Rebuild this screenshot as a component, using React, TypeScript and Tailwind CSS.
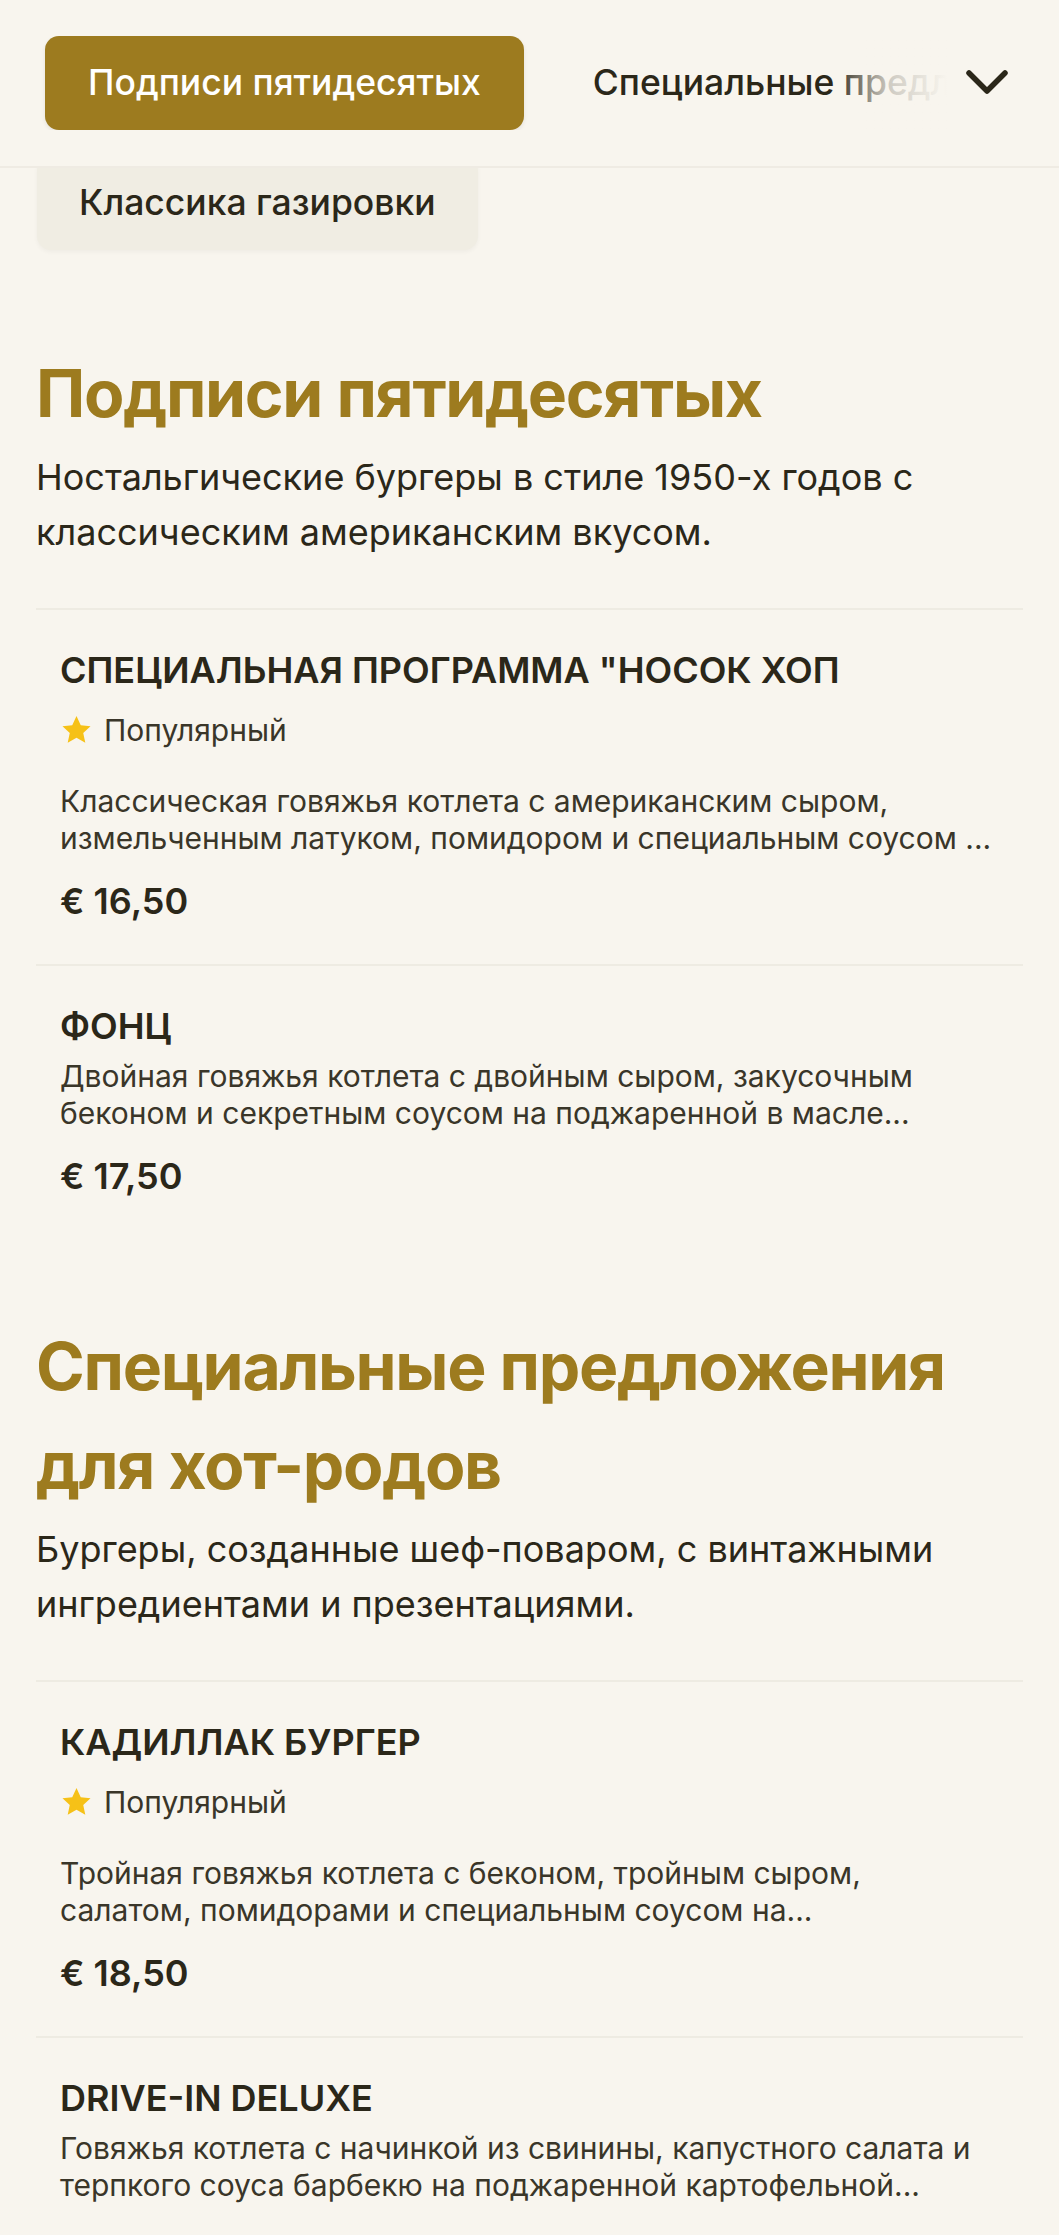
import { ReactNode } from 'react';

type MenuItem = {
  name: string;
  popular?: boolean;
  description: string;
  price: string;
};

type MenuSection = {
  id: string;
  title: string;
  description: string;
  items: MenuItem[];
};

const tabs = ['Подписи пятидесятых', 'Специальные предложения для хот-родов', 'Классика газировки'];

// descriptions are clamped to two lines in the app, kept here as they show
const sections: MenuSection[] = [
  {
    id: 'fifties',
    title: 'Подписи пятидесятых',
    description: 'Ностальгические бургеры в стиле 1950-х годов с классическим американским вкусом.',
    items: [
      {
        name: 'СПЕЦИАЛЬНАЯ ПРОГРАММА "НОСОК ХОП',
        popular: true,
        description:
          'Классическая говяжья котлета с американским сыром,\nизмельченным латуком, помидором и специальным соусом ...',
        price: '€ 16,50',
      },
      {
        name: 'ФОНЦ',
        description:
          'Двойная говяжья котлета с двойным сыром, закусочным\nбеконом и секретным соусом на поджаренной в масле...',
        price: '€ 17,50',
      },
    ],
  },
  {
    id: 'hotrod',
    title: 'Специальные предложения для хот-родов',
    description: 'Бургеры, созданные шеф-поваром, с винтажными ингредиентами и презентациями.',
    items: [
      {
        name: 'КАДИЛЛАК БУРГЕР',
        popular: true,
        description:
          'Тройная говяжья котлета с беконом, тройным сыром,\nсалатом, помидорами и специальным соусом на...',
        price: '€ 18,50',
      },
      {
        name: 'DRIVE-IN DELUXE',
        description:
          'Говяжья котлета с начинкой из свинины, капустного салата и\nтерпкого соуса барбекю на поджаренной картофельной...',
        price: '€ 17,50',
      },
    ],
  },
];

function StarIcon() {
  return (
    <svg width="33" height="33" viewBox="0 0 24 24" className="shrink-0">
      <polygon
        points="12 1.5 15.1 8.1 22.2 8.9 16.9 13.8 18.4 20.9 12 17.3 5.6 20.9 7.1 13.8 1.8 8.9 8.9 8.1"
        fill="#f6c117"
      />
    </svg>
  );
}

function Tab({ children, active }: { children: ReactNode; active?: boolean }) {
  return (
    <button
      className={`flex h-[94px] shrink-0 items-center whitespace-nowrap rounded-[14px] px-[43px] text-[35.5px] font-medium ${
        active ? 'bg-[#9d7b1f] text-white shadow-[0_2px_4px_rgba(0,0,0,0.08)]' : 'text-[#2b2719]'
      }`}
    >
      {children}
    </button>
  );
}

function Item({ item }: { item: MenuItem }) {
  return (
    <article className="border-t-2 border-[#eeebe2] px-6 pb-[37px] pt-[33px]">
      <h3 className="mb-[5px] text-[36px] font-semibold leading-[54px] text-[#2b2719]">{item.name}</h3>
      {item.popular && (
        <div className="mb-[32px] mt-[12px] flex items-center gap-[11px] text-[30px] leading-[42px] text-[#3a3629]">
          <StarIcon />
          <span>Популярный</span>
        </div>
      )}
      <p className="whitespace-pre-line text-[30px] leading-[37px] text-[#3a3629]">{item.description}</p>
      <div className="mt-[19px] text-[36px] font-semibold leading-[51px] text-[#2b2719]">{item.price}</div>
    </article>
  );
}

export default function App() {
  return (
    <div className="h-[2235px] overflow-hidden bg-[#f8f5ee] font-['Inter','Noto_Sans',sans-serif] text-[#2b2719]">
      {/* sticky category bar */}
      <header className="relative z-10 flex h-[168px] items-center border-b-2 border-[#efebe3] bg-[#f8f5ee]">
        <div className="relative min-w-0 flex-1 overflow-hidden">
          <nav className="flex gap-[26px] pl-[45px]">
            {tabs.slice(0, 2).map((t, i) => (
              <Tab key={t} active={i === 0}>
                {t}
              </Tab>
            ))}
          </nav>
          <div className="pointer-events-none absolute inset-y-0 right-0 w-[115px] bg-linear-to-l from-[#f8f5ee] via-[#f8f5ee]/80 to-transparent" />
        </div>
        <button className="mr-[32px] flex h-[94px] w-[80px] shrink-0 items-center justify-center">
          <svg width="44" height="28" viewBox="0 0 44 28" fill="none">
            <path d="M4 4 L22 22 L40 4" stroke="#2b2719" strokeWidth="5.5" strokeLinecap="round" strokeLinejoin="round" />
          </svg>
        </button>
      </header>

      <div className="-mt-[12px] px-[37px]">
        <div className="inline-flex h-[94px] items-center rounded-[14px] bg-[#f0ede3] px-[42px] text-[35.5px] font-medium text-[#2b2719] shadow-[0_2px_4px_rgba(0,0,0,0.04)]">
          {tabs[2]}
        </div>
      </div>

      {sections.map((section, i) => (
        <section key={section.id} className={`px-9 ${i === 0 ? 'pt-[94px]' : 'pt-[78px]'}`}>
          <h2 className="text-[66px] font-bold leading-[1.5] tracking-[-0.02em] text-[#9d7b1f]">{section.title}</h2>
          <p className="mb-[48px] mt-[7px] text-[36px] leading-[55px] text-[#2b2719]">{section.description}</p>
          <div>
            {section.items.map((item) => (
              <Item key={item.name} item={item} />
            ))}
          </div>
        </section>
      ))}
    </div>
  );
}
